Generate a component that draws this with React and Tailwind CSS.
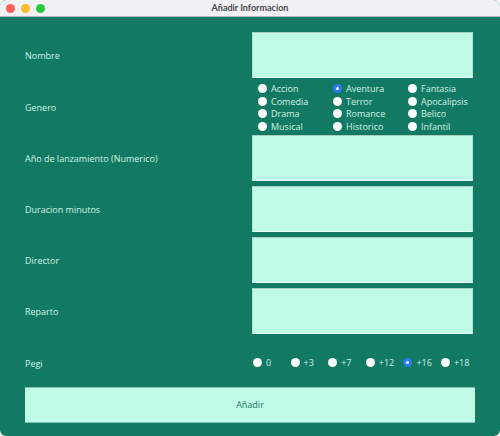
import React, { useState } from 'react';

const generos = [
    'Accion', 'Aventura', 'Fantasia',
    'Comedia', 'Terror', 'Apocalipsis',
    'Drama', 'Romance', 'Belico',
    'Musical', 'Historico', 'Infantil',
];

const pegis = ['0', '+3', '+7', '+12', '+16', '+18'];

function Radio({ checked }) {
    return checked ? (
        <span className="w-[9px] h-[9px] rounded-full bg-[#2a7cf6] flex items-center justify-center shrink-0">
            <span className="w-[3px] h-[3px] rounded-full bg-white"></span>
        </span>
    ) : (
        <span className="w-[9px] h-[9px] rounded-full bg-white shrink-0"></span>
    );
}

function Campo() {
    return <div className="w-[221px] h-[46px] bg-[#c0fbe7] border-t border-t-[#a5cfc1] border-b border-b-[#e6fff6] border-x border-x-[#b2e4d3]"></div>;
}

function Fila({ label, children }) {
    return (
        <div className="flex items-center">
            <div className="w-[227px] pt-[2px] text-[9px] text-[#d3f1e6]">{label}</div>
            {children}
        </div>
    );
}

export default function App() {
    const [genero] = useState('Aventura');
    const [pegi] = useState('+16');

    return (
        <div className="w-[500px] h-[436px] bg-[#127963] flex flex-col overflow-hidden rounded-[6px]" style={{ fontFamily: '"Open Sans", "Lato", sans-serif' }}>
            <div className="h-[17px] bg-[#f1f0f5] border-b border-[#b9b9bd] flex items-center relative shrink-0">
                <div className="flex gap-[6px] pl-[6px]">
                    <span className="w-[9px] h-[9px] rounded-full bg-[#fe5f57]"></span>
                    <span className="w-[9px] h-[9px] rounded-full bg-[#febc2e]"></span>
                    <span className="w-[9px] h-[9px] rounded-full bg-[#28c840]"></span>
                </div>
                <div className="absolute inset-0 flex items-center justify-center text-[9px] font-bold text-[#4a4a4c]" style={{ fontFamily: '"Lato", sans-serif' }}>Añadir Informacion</div>
            </div>

            <div className="flex flex-col pl-[25px] pt-[15px]">
                <Fila label="Nombre"><Campo /></Fila>

                <Fila label="Genero">
                    <div className="grid grid-cols-[75px_75px_60px] pl-[6px] pt-[4.5px] pb-[2.5px]">
                        {generos.map((g) => (
                            <div key={g} className="flex items-center gap-[4px] h-[12.5px] text-[9px] text-[#d3f1e6]">
                                <Radio checked={g === genero} />
                                <span>{g}</span>
                            </div>
                        ))}
                    </div>
                </Fila>

                <div className="flex flex-col gap-[5px]">
                    <Fila label="Año de lanzamiento (Numerico)"><Campo /></Fila>
                    <Fila label="Duracion minutos"><Campo /></Fila>
                    <Fila label="Director"><Campo /></Fila>
                    <Fila label="Reparto"><Campo /></Fila>
                </div>

                <div className="flex items-center h-[53px] pt-[4px]">
                    <div className="w-[228px] pt-[2px] text-[9px] text-[#d3f1e6]">Pegi</div>
                    <div className="flex">
                        {pegis.map((p) => (
                            <div key={p} className="w-[37.6px] flex items-center gap-[4px] text-[9px] text-[#d3f1e6]">
                                <Radio checked={p === pegi} />
                                <span>{p}</span>
                            </div>
                        ))}
                    </div>
                </div>

                <button className="w-[450px] h-[36px] bg-[#c0fbe7] border-t border-[#7fc2ad] border-b text-[9px] text-[#1d7a63]">Añadir</button>
            </div>
        </div>
    );
}
